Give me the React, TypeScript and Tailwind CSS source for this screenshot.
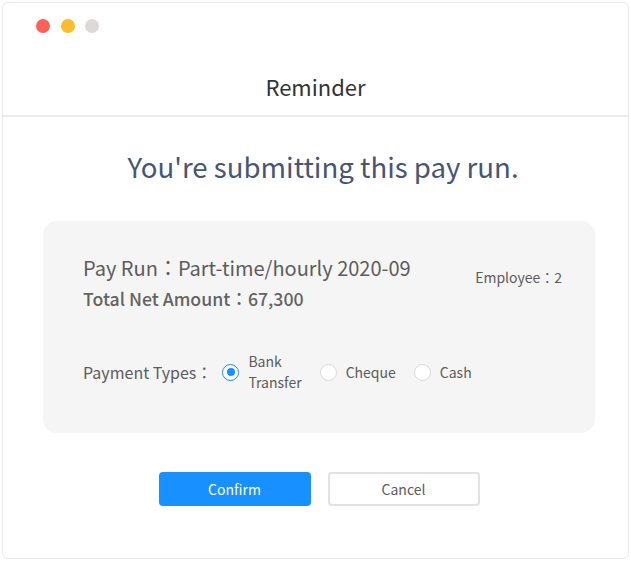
import { useState } from "react";

const font = { fontFamily: '"Noto Sans CJK JP", "Noto Sans", sans-serif' };

const types = [
  { id: "bank", label: ["Bank", "Transfer"] },
  { id: "cheque", label: ["Cheque"] },
  { id: "cash", label: ["Cash"] },
];

function Radio({ checked }: { checked: boolean }) {
  return (
    <span
      className={`flex h-[17px] w-[17px] shrink-0 items-center justify-center rounded-full border bg-white ${
        checked ? "border-[#1890ff]" : "border-[#d9d9d9]"
      }`}
    >
      {checked && <span className="h-[8px] w-[8px] rounded-full bg-[#1890ff]" />}
    </span>
  );
}

export default function App() {
  const [payType, setPayType] = useState("bank");

  return (
    <div className="h-[561px] w-[631px] bg-white p-[2px]" style={font}>
      <div className="flex h-[557px] flex-col rounded-[6px] border border-[#e6eaef] bg-white">
        {/* title bar */}
        <div className="flex gap-[10.5px] pl-[33px] pt-[16px]">
          <span className="h-[14px] w-[14px] rounded-full bg-[#fe5f57]" />
          <span className="h-[14px] w-[14px] rounded-full bg-[#fbbc2e]" />
          <span className="h-[14px] w-[14px] rounded-full bg-[#ded8d6]" />
        </div>
        <div className="border-b-2 border-[#ebebeb] pb-[13px] pt-[37px] text-center text-[22px] leading-[32px] text-[#333]">
          Reminder
        </div>

        <h1 className="mt-[29px] pl-[15px] text-center text-[27.6px] leading-[40px] text-[#475573]">
          You're submitting this pay run.
        </h1>

        {/* summary card */}
        <div className="ml-[40px] mr-[33px] mt-[35px] h-[212px] rounded-[14px] bg-[#f5f5f5] pl-[40px] pr-[33px] pt-[33px]">
          <div className="flex justify-between">
            <div className="text-[#5c5c5c]">
              <div className="text-[20px] leading-[28px]">Pay Run：Part-time/hourly 2020-09</div>
              <div className="mt-[2px] text-[17.7px] font-medium leading-[28px] text-[#636363]">Total Net Amount：67,300</div>
            </div>
            <div className="pt-[13px] text-[14px] leading-[20px] text-[#5c5c5c]">Employee：2</div>
          </div>

          <div className="mt-[39px] flex items-center">
            <span className="text-[16px] leading-[24px] text-[#5c5c5c]">Payment Types：</span>
            <div className="ml-[10px] flex items-center gap-[18px]">
              {types.map((t) => (
                <label
                  key={t.id}
                  onClick={() => setPayType(t.id)}
                  className="flex cursor-pointer items-center gap-[9px]"
                >
                  <Radio checked={payType === t.id} />
                  <span className="text-[14px] leading-[21px] text-[#5c5c5c]">
                    {t.label.map((l) => (
                      <span key={l} className="block">
                        {l}
                      </span>
                    ))}
                  </span>
                </label>
              ))}
            </div>
          </div>
        </div>

        {/* actions */}
        <div className="mt-[39px] flex justify-center gap-[17px] pl-[7px]">
          <button className="h-[34px] w-[152px] rounded-[4px] bg-[#1890ff] text-[14px] text-white">Confirm</button>
          <button className="h-[34px] w-[152px] rounded-[4px] border-2 border-[#e2e2e2] bg-white text-[14px] text-[#5c5c5c]">
            Cancel
          </button>
        </div>
      </div>
    </div>
  );
}
